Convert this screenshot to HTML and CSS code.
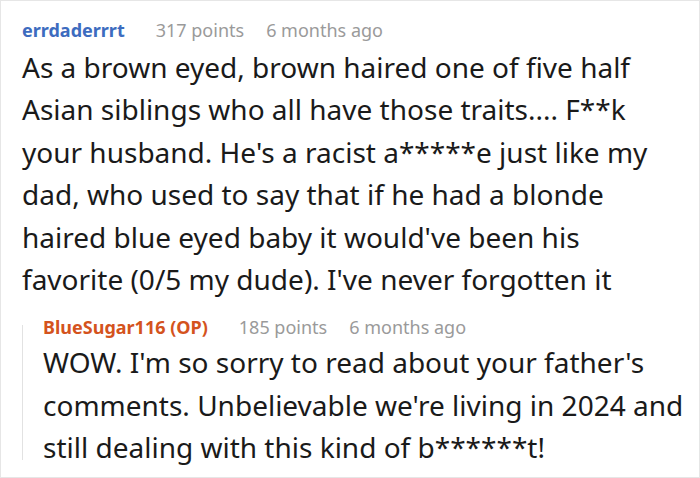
FILE: index.html
```html
<!DOCTYPE html>
<html>
<head>
<meta charset="utf-8">
<link rel="stylesheet" href="styles.css">
</head>
<body>
<div class="frame">
  <div class="comment">
    <div class="meta">
      <span class="user">errdaderrrt</span>
      <span class="points">317 points</span>
      <span class="time">6 months ago</span>
    </div>
    <p class="text">As a brown eyed, brown haired one of five half Asian siblings who all have those traits.... F**k your husband. He's a racist a*****e just like my dad, who used to say that if he had a blonde haired blue eyed baby it would've been his favorite (0/5 my dude). I've never forgotten it</p>
  </div>
  <div class="reply">
    <div class="rail"></div>
    <div class="reply-content">
      <div class="meta">
        <span class="user op">BlueSugar116 (OP)</span>
        <span class="points">185 points</span>
        <span class="time">6 months ago</span>
      </div>
      <p class="text">WOW. I'm so sorry to read about your father's comments. Unbelievable we're living in 2024 and still dealing with this kind of b******t!</p>
    </div>
  </div>
</div>
</body>
</html>
```

FILE: styles.css
```css
html, body {
  margin: 0;
  padding: 0;
  background: #ffffff;
}
.frame {
  box-sizing: border-box;
  width: 700px;
  height: 478px;
  border: 1px solid #e6e6e6;
  padding: 17px 14px 0 21px;
  overflow: hidden;
  font-family: "Noto Sans", "Open Sans", sans-serif;
  color: #1a1a1a;
}
.meta {
  display: flex;
  align-items: baseline;
  font-size: 18px;
  line-height: 24px;
  white-space: nowrap;
}
.user {
  font-weight: 700;
  color: #3d6cbf;
}
.user.op {
  color: #d4531d;
}
.points {
  color: #9a9a9a;
  margin-left: 31px;
}
.time {
  color: #9a9a9a;
  margin-left: 22px;
}
.text {
  margin: 4px 0 0;
  font-size: 28px;
  line-height: 42.4px;
}
.reply {
  display: flex;
  margin-top: 15px;
}
.rail {
  flex: none;
  width: 1px;
  background: #e2e2e2;
  margin: 10px 0 9px;
}
.reply-content {
  margin-left: 20px;
  min-width: 0;
}
.reply .text {
  margin-top: 2px;
}
```
